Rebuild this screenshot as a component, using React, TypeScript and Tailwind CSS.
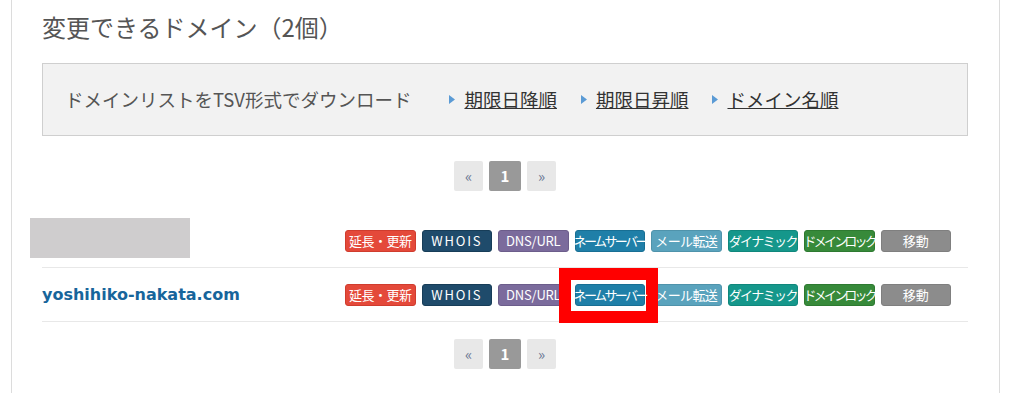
import React from 'react'

const jp = { fontFamily: '"Noto Sans CJK JP", "Liberation Sans", sans-serif' }

type Btn = { label: string; cls: string }

const buttons: Btn[] = [
  { label: '延長・更新', cls: 'bg-[#e4493a] border-[#d03c2e] tracking-[-0.5px]' },
  { label: 'WHOIS', cls: 'bg-[#1f4b6b] border-[#173d58] tracking-[1.8px] text-[12px]' },
  { label: 'DNS/URL', cls: 'bg-[#7b6b9c] border-[#6c5d8b] tracking-[-0.2px]' },
  { label: 'ネームサーバー', cls: 'bg-[#1f7fa8] border-[#186f94] tracking-[-2.6px]' },
  { label: 'メール転送', cls: 'bg-[#5aa3bd] border-[#4f93ab] tracking-[-0.6px]' },
  { label: 'ダイナミック', cls: 'bg-[#15978b] border-[#10877c] tracking-[-1.6px]' },
  { label: 'ドメインロック', cls: 'bg-[#378a3a] border-[#2e7a31] tracking-[-2.8px]' },
  { label: '移動', cls: 'bg-[#8c8c8c] border-[#7f7f7f]' },
]

function Tri() {
  return (
    <svg width="6" height="9" viewBox="0 0 6 9" className="mr-[9px] shrink-0">
      <path d="M0 0 L6 4.5 L0 9 Z" fill="#5b9bd5" />
    </svg>
  )
}

function Pager() {
  return (
    <div className="flex justify-center gap-[6px]">
      <div className="w-[29px] h-[30px] rounded-[2px] bg-[#e8e8e8] flex items-center justify-center text-[15px] text-[#6b7894]">«</div>
      <div className="w-[32px] h-[30px] rounded-[2px] bg-[#999] flex items-center justify-center text-[15px] font-bold text-white">1</div>
      <div className="w-[29px] h-[30px] rounded-[2px] bg-[#e8e8e8] flex items-center justify-center text-[15px] text-[#6b7894]">»</div>
    </div>
  )
}

function Actions({ mark }: { mark?: boolean }) {
  return (
    <div className="flex gap-[6px]">
      {buttons.map((b, i) => {
        const marked = mark && i === 3
        const btn = (
          <div
            className={`w-[70.5px] h-[22px] rounded-[3px] border flex items-center justify-center whitespace-nowrap text-white text-[13px] ${b.cls} ${marked ? 'relative z-20' : ''}`}
          >
            {b.label}
          </div>
        )
        if (marked) {
          return (
            <div key={b.label} className="relative">
              <div className="absolute z-10 left-[-16px] top-[-16px] w-[99px] h-[55px] border-[12px] border-[#ff0000] bg-white" />
              {btn}
            </div>
          )
        }
        return <div key={b.label}>{btn}</div>
      })}
    </div>
  )
}

export default function App() {
  return (
    <div className="w-[1024px] h-[393px] overflow-hidden bg-white pl-[11px]" style={jp}>
      <div className="w-[989px] h-full border-x border-[#dcdcdc] pl-[30px] pr-[31px] pt-[10px]">
        <h2 className="text-[24px] leading-[33px] text-[#555]">変更できるドメイン（2個）</h2>

        <div className="mt-[20px] h-[73px] border border-[#cfcfcf] bg-[#f2f2f2] flex items-center pl-[22px] text-[18.5px] text-[#555]">
          <span>ドメインリストをTSV形式でダウンロード</span>
          <div className="ml-[38px] flex items-center">
            <Tri />
            <a className="underline text-[#333]">期限日降順</a>
          </div>
          <div className="ml-[24px] flex items-center">
            <Tri />
            <a className="underline text-[#333]">期限日昇順</a>
          </div>
          <div className="ml-[24px] flex items-center">
            <Tri />
            <a className="underline text-[#333]">ドメイン名順</a>
          </div>
        </div>

        <div className="mt-[25px]">
          <Pager />
        </div>

        <div className="mt-[23px]">
          <div className="h-[54px] border-b border-[#e8e8e8] flex items-center justify-between pr-[17px]">
            <div className="-ml-[12px] w-[160px] h-[40px] bg-[#cfcdce] -mt-[6px]" />
            <Actions />
          </div>
          <div className="h-[54px] border-b border-[#e8e8e8] flex items-center justify-between pr-[17px]">
            <span
              className="text-[16px] font-bold text-[#17659b]"
              style={{ fontFamily: '"DejaVu Sans", sans-serif' }}
            >
              yoshihiko-nakata.com
            </span>
            <Actions mark />
          </div>
        </div>

        <div className="mt-[17px]">
          <Pager />
        </div>
      </div>
    </div>
  )
}
